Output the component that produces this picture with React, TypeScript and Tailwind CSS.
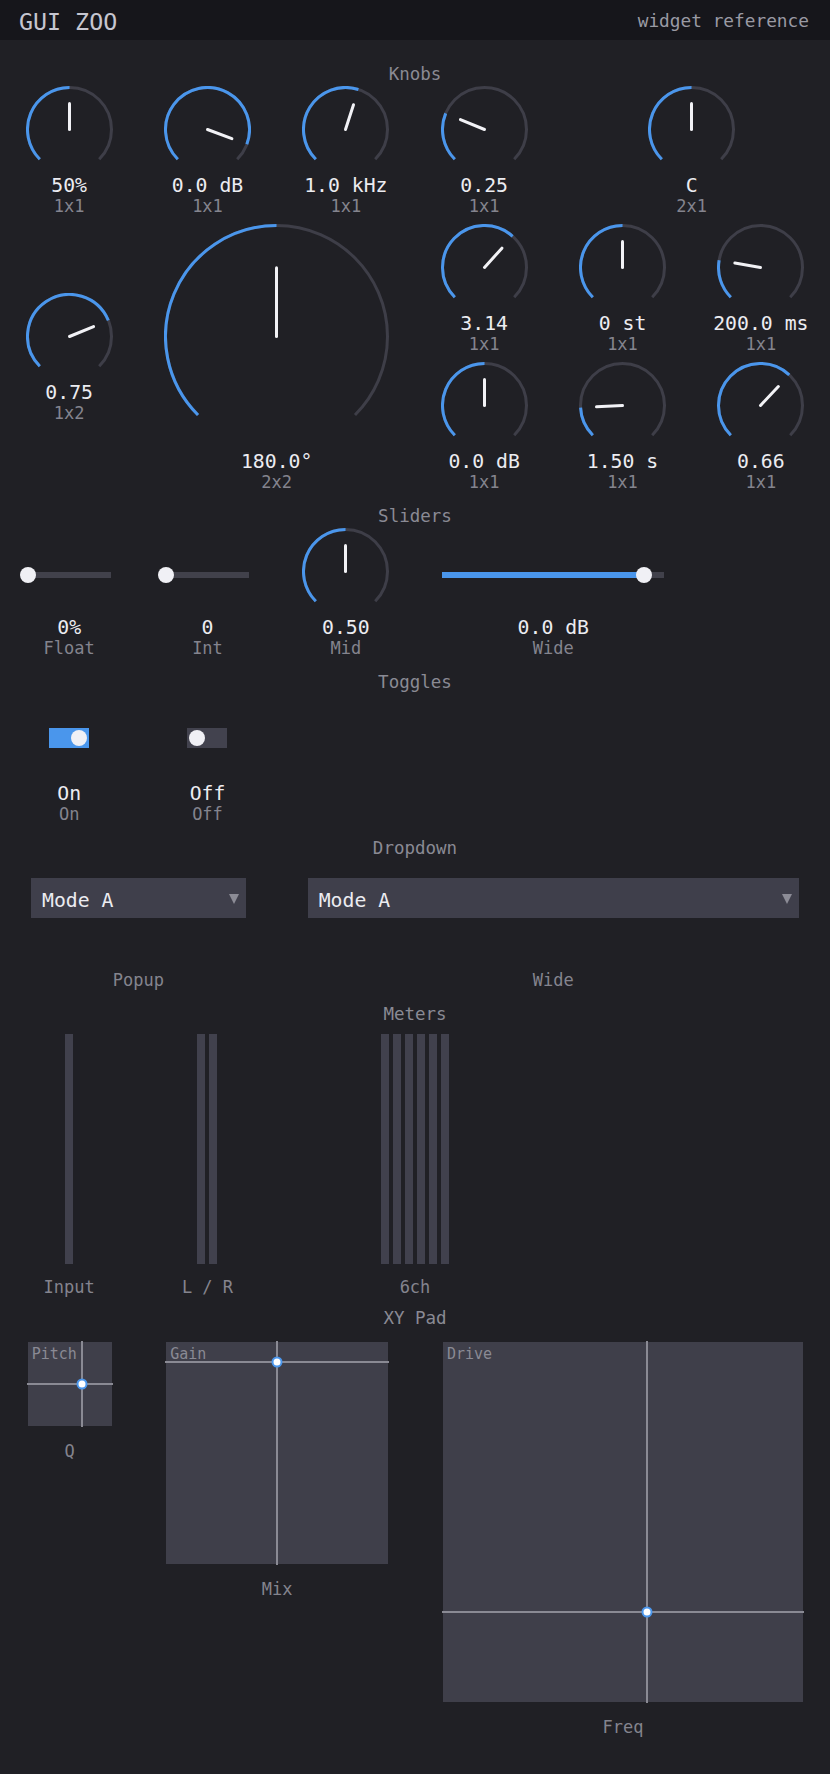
import React from "react";

const BLUE = "#4a96ec";
const TRACK = "#3e3e48";

const spanCls: Record<string, string> = {
  "1x1": "col-span-1 row-span-1",
  "2x1": "col-span-2 row-span-1",
  "1x2": "col-span-1 row-span-2",
  "2x2": "col-span-2 row-span-2",
  "3x3": "col-span-3 row-span-3",
  "4x1": "col-span-4 row-span-1",
};

function KnobSvg({ size, angle }: { size: number; angle: number }) {
  const sw = 3;
  const c = size / 2;
  const r = c - sw / 2;
  const pt = (a: number, rr: number) => [
    c + rr * Math.sin((a * Math.PI) / 180),
    c - rr * Math.cos((a * Math.PI) / 180),
  ];
  const arc = (a0: number, a1: number) => {
    const [x0, y0] = pt(a0, r);
    const [x1, y1] = pt(a1, r);
    const large = a1 - a0 > 180 ? 1 : 0;
    return `M ${x0} ${y0} A ${r} ${r} 0 ${large} 1 ${x1} ${y1}`;
  };
  const [lx, ly] = pt(angle, r * 0.62);
  return (
    <svg width={size} height={size} viewBox={`0 0 ${size} ${size}`} className="shrink-0">
      <path d={arc(-135, 135)} stroke={TRACK} strokeWidth={sw} fill="none" />
      <path d={arc(-135, angle)} stroke={BLUE} strokeWidth={sw} fill="none" />
      <line x1={c} y1={c} x2={lx} y2={ly} stroke="#f2f2f6" strokeWidth={3} strokeLinecap="round" />
    </svg>
  );
}

function ValueLabel({ value, label }: { value?: string; label: string }) {
  return (
    <>
      <div className="h-[25px] leading-[25px] text-[19.8px] text-[#ececf1] whitespace-nowrap">{value}</div>
      <div className="h-[16px] leading-[16px] text-[17px] text-[#84848e] whitespace-nowrap">{label}</div>
      <div className="h-[10px]" />
    </>
  );
}

function Knob({ span, angle, value, label }: { span: string; angle: number; value: string; label: string }) {
  const [c, r] = span.split("x").map(Number);
  const size = Math.round(Math.min((c * 830) / 6, r * 138) - 51);
  return (
    <div className={`${spanCls[span]} flex flex-col items-center justify-center`}>
      <KnobSvg size={size} angle={angle} />
      <ValueLabel value={value} label={label} />
    </div>
  );
}

function Slider({ span, v, value, label }: { span: string; v: number; value: string; label: string }) {
  return (
    <div className={`${spanCls[span]} flex flex-col items-center`}>
      <div className="h-[87px] w-full px-[27.5px] pt-[7px] flex items-center">
        <div className="relative h-[6px] w-full bg-[#41414b]">
          <div className="absolute left-0 top-0 h-full bg-[#4a96ec]" style={{ width: `${v * 100}%` }} />
          <div
            className="absolute top-1/2 h-[16px] w-[16px] -translate-x-1/2 -translate-y-1/2 rounded-full bg-[#f0f0f5]"
            style={{ left: `${v * 100}%` }}
          />
        </div>
      </div>
      <ValueLabel value={value} label={label} />
    </div>
  );
}

function Toggle({ on, label }: { on: boolean; label: string }) {
  return (
    <div className="col-span-1 flex flex-col items-center">
      <div className="h-[87px] flex items-center">
        <div
          className={
            on
              ? "h-[20px] w-[40px] bg-[#4a96ec] flex items-center justify-end px-[2px]"
              : "h-[20px] w-[40px] bg-[#42424e] flex items-center justify-start px-[2px]"
          }
        >
          <div className="h-[16px] w-[16px] rounded-full bg-[#f0f0f5]" />
        </div>
      </div>
      <ValueLabel value={on ? "On" : "Off"} label={label} />
    </div>
  );
}

function Dropdown({ span, label }: { span: string; label: string }) {
  return (
    <div className={`${spanCls[span]} flex flex-col px-[31px]`}>
      <div className="h-[112px] pt-[18px]">
        <div className="h-[40px] bg-[#3f3f4b] flex items-center justify-between pl-[11px] pr-[7px] pt-[5px]">
          <span className="text-[19.8px] leading-[24px] text-[#ececf1]">Mode A</span>
          <svg width="10" height="10" viewBox="0 0 10 10" className="mb-[3px]">
            <polygon points="0,0 10,0 5,10" fill="#8c8c96" />
          </svg>
        </div>
      </div>
      <div className="h-[16px] leading-[16px] text-[17px] text-[#84848e] text-center">{label}</div>
    </div>
  );
}

function Meter({ span, bars, label }: { span: string; bars: number; label: string }) {
  return (
    <div className={`${spanCls[span]} flex flex-col items-center pt-[8px]`}>
      <div className="flex gap-[4px] h-[230px]">
        {Array.from({ length: bars }).map((_, i) => (
          <div key={i} className="w-[8px] h-full bg-[#41414d]" />
        ))}
      </div>
      <div className="mt-[15px] h-[16px] leading-[16px] text-[17px] text-[#84848e]">{label}</div>
    </div>
  );
}

function XYPad({
  span,
  padCls,
  x,
  y,
  title,
  label,
}: {
  span: string;
  padCls: string;
  x: number;
  y: number;
  title: string;
  label: string;
}) {
  return (
    <div className={`${spanCls[span]} flex flex-col items-center pt-[12px] pl-[1px]`}>
      <div className={`relative bg-[#3f3f4a] pl-[4px] pt-[3px] ${padCls}`}>
        <div className="text-[15px] leading-[18px] text-[#8a8a94]">{title}</div>
        <div
          className="absolute top-[-1px] bottom-[-1px] w-[2px] bg-[#8a8a94]"
          style={{ left: `calc(${x * 100}% - 1px)` }}
        />
        <div
          className="absolute left-[-1px] right-[-1px] h-[2px] bg-[#8a8a94]"
          style={{ top: `calc(${(1 - y) * 100}% - 1px)` }}
        />
        <div
          className="absolute h-[11px] w-[11px] -translate-x-1/2 -translate-y-1/2 rounded-full border-2 border-[#4a96ec] bg-white"
          style={{ left: `${x * 100}%`, top: `${(1 - y) * 100}%` }}
        />
      </div>
      <div className="mt-[17px] h-[16px] leading-[16px] text-[17px] text-[#84848e]">{label}</div>
    </div>
  );
}

function Section({ title, children }: { title: string; children: React.ReactNode }) {
  return (
    <div className="flex flex-col">
      <div className="h-[24px] leading-[24px] text-center text-[17.5px] text-[#8a8a94]">{title}</div>
      <div className="grid grid-cols-6 auto-rows-[138px]">{children}</div>
    </div>
  );
}

export default function App() {
  return (
    <div className="w-[830px] min-h-[1774px] bg-[#202025] font-['DejaVu_Sans_Mono','Liberation_Mono',monospace]">
      <div className="h-[40px] bg-[#16161b] flex items-center justify-between pl-[19px] pr-[21px] pt-[3px]">
        <span className="text-[23.3px] leading-[28px] text-[#c6c6d0]">GUI ZOO</span>
        <span className="text-[17.8px] leading-[22px] text-[#9a9aa4] -mt-[1px]">widget reference</span>
      </div>
      <div className="flex flex-col gap-[4px] pt-[22px] pb-[30px]">
        <Section title="Knobs">
          <Knob span="1x1" angle={0} value="50%" label="1x1" />
          <Knob span="1x1" angle={110.5} value="0.0 dB" label="1x1" />
          <Knob span="1x1" angle={17.9} value="1.0 kHz" label="1x1" />
          <Knob span="1x1" angle={-67.5} value="0.25" label="1x1" />
          <Knob span="2x1" angle={0} value="C" label="2x1" />
          <Knob span="1x2" angle={67.5} value="0.75" label="1x2" />
          <Knob span="2x2" angle={0} value="180.0°" label="2x2" />
          <Knob span="1x1" angle={42} value="3.14" label="1x1" />
          <Knob span="1x1" angle={0} value="0 st" label="1x1" />
          <Knob span="1x1" angle={-80} value="200.0 ms" label="1x1" />
          <Knob span="1x1" angle={0} value="0.0 dB" label="1x1" />
          <Knob span="1x1" angle={-93} value="1.50 s" label="1x1" />
          <Knob span="1x1" angle={43.2} value="0.66" label="1x1" />
        </Section>
        <Section title="Sliders">
          <Slider span="1x1" v={0} value="0%" label="Float" />
          <Slider span="1x1" v={0} value="0" label="Int" />
          <Knob span="1x1" angle={0} value="0.50" label="Mid" />
          <Slider span="2x1" v={0.909} value="0.0 dB" label="Wide" />
        </Section>
        <Section title="Toggles">
          <Toggle on={true} label="On" />
          <Toggle on={false} label="Off" />
        </Section>
        <Section title="Dropdown">
          <Dropdown span="2x1" label="Popup" />
          <Dropdown span="4x1" label="Wide" />
        </Section>
        <Section title="Meters">
          <Meter span="1x2" bars={1} label="Input" />
          <Meter span="1x2" bars={2} label="L / R" />
          <Meter span="2x2" bars={6} label="6ch" />
        </Section>
        <Section title="XY Pad">
          <XYPad span="1x1" padCls="w-[84px] h-[84px]" x={0.65} y={0.5} title="Pitch" label="Q" />
          <XYPad span="2x2" padCls="w-[222px] h-[222px]" x={0.5} y={0.909} title="Gain" label="Mix" />
          <XYPad span="3x3" padCls="w-[360px] h-[360px]" x={0.566} y={0.25} title="Drive" label="Freq" />
        </Section>
      </div>
    </div>
  );
}
